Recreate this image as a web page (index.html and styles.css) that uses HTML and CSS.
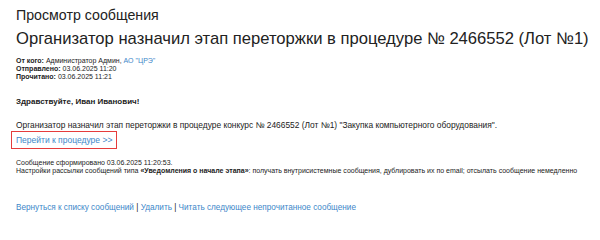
FILE: index.html
```html
<!DOCTYPE html>
<html lang="ru">
<head>
<meta charset="utf-8">
<title>Просмотр сообщения</title>
<link rel="stylesheet" href="styles.css">
</head>
<body>
<div class="page">
  <div class="page-title">Просмотр сообщения</div>
  <h1 class="subject">Организатор назначил этап переторжки в процедуре № 2466552 (Лот №1)</h1>
  <div class="meta">
    <div><b>От кого:</b> Администратор Админ, <a class="link" href="#">АО "ЦРЭ"</a></div>
    <div><b>Отправлено:</b> 03.06.2025 11:20</div>
    <div><b>Прочитано:</b> 03.06.2025 11:21</div>
  </div>
  <div class="body">
    <p class="greet">Здравствуйте, Иван Иванович!</p>
    <p class="text">Организатор назначил этап переторжки в процедуре конкурс № 2466552 (Лот №1) "Закупка компьютерного оборудования".</p>
    <div class="goto-wrap"><a class="goto link" href="#">Перейти к процедуре &gt;&gt;</a></div>
  </div>
  <div class="footer-info">
    <div>Сообщение сформировано 03.06.2025 11:20:53.</div>
    <div>Настройки рассылки сообщений типа <b>«Уведомления о начале этапа»</b>: получать внутрисистемные сообщения, дублировать их по email; отсылать сообщение немедленно</div>
  </div>
  <div class="actions">
    <a class="link" href="#">Вернуться к списку сообщений</a> | <a class="link" href="#">Удалить</a> | <a class="link" href="#">Читать следующее непрочитанное сообщение</a>
  </div>
</div>
</body>
</html>
```

FILE: styles.css
```css
html, body {
  margin: 0;
  padding: 0;
  background: #ffffff;
}
.page {
  font-family: "Liberation Sans", Arial, sans-serif;
  color: #222222;
  padding: 7px 0 0 16px;
}
.page-title {
  font-size: 14.2px;
  line-height: 17px;
}
.subject {
  font-size: 16.6px;
  font-weight: normal;
  line-height: 22px;
  margin: 4px 0 7px 0;
  white-space: nowrap;
}
.meta {
  font-size: 7px;
  line-height: 8px;
}
.link {
  color: #3d87c9;
  text-decoration: none;
}
.body p {
  margin: 0;
}
.greet {
  font-weight: bold;
  font-size: 8px;
  line-height: 10px;
  padding-top: 16px;
}
.text {
  font-size: 8.4px;
  line-height: 10px;
  padding-top: 13px;
}
.goto-wrap {
  margin-left: -5px;
  margin-top: 1px;
  display: flex;
}
.goto {
  font-size: 8.5px;
  line-height: 12px;
  padding: 2px 4px 2px 4px;
  border: 1.5px solid #e53c3c;
}
.footer-info {
  font-size: 7px;
  line-height: 8px;
  margin-top: 10px;
}
.actions {
  font-size: 8.2px;
  line-height: 10px;
  margin-top: 28px;
}
```
